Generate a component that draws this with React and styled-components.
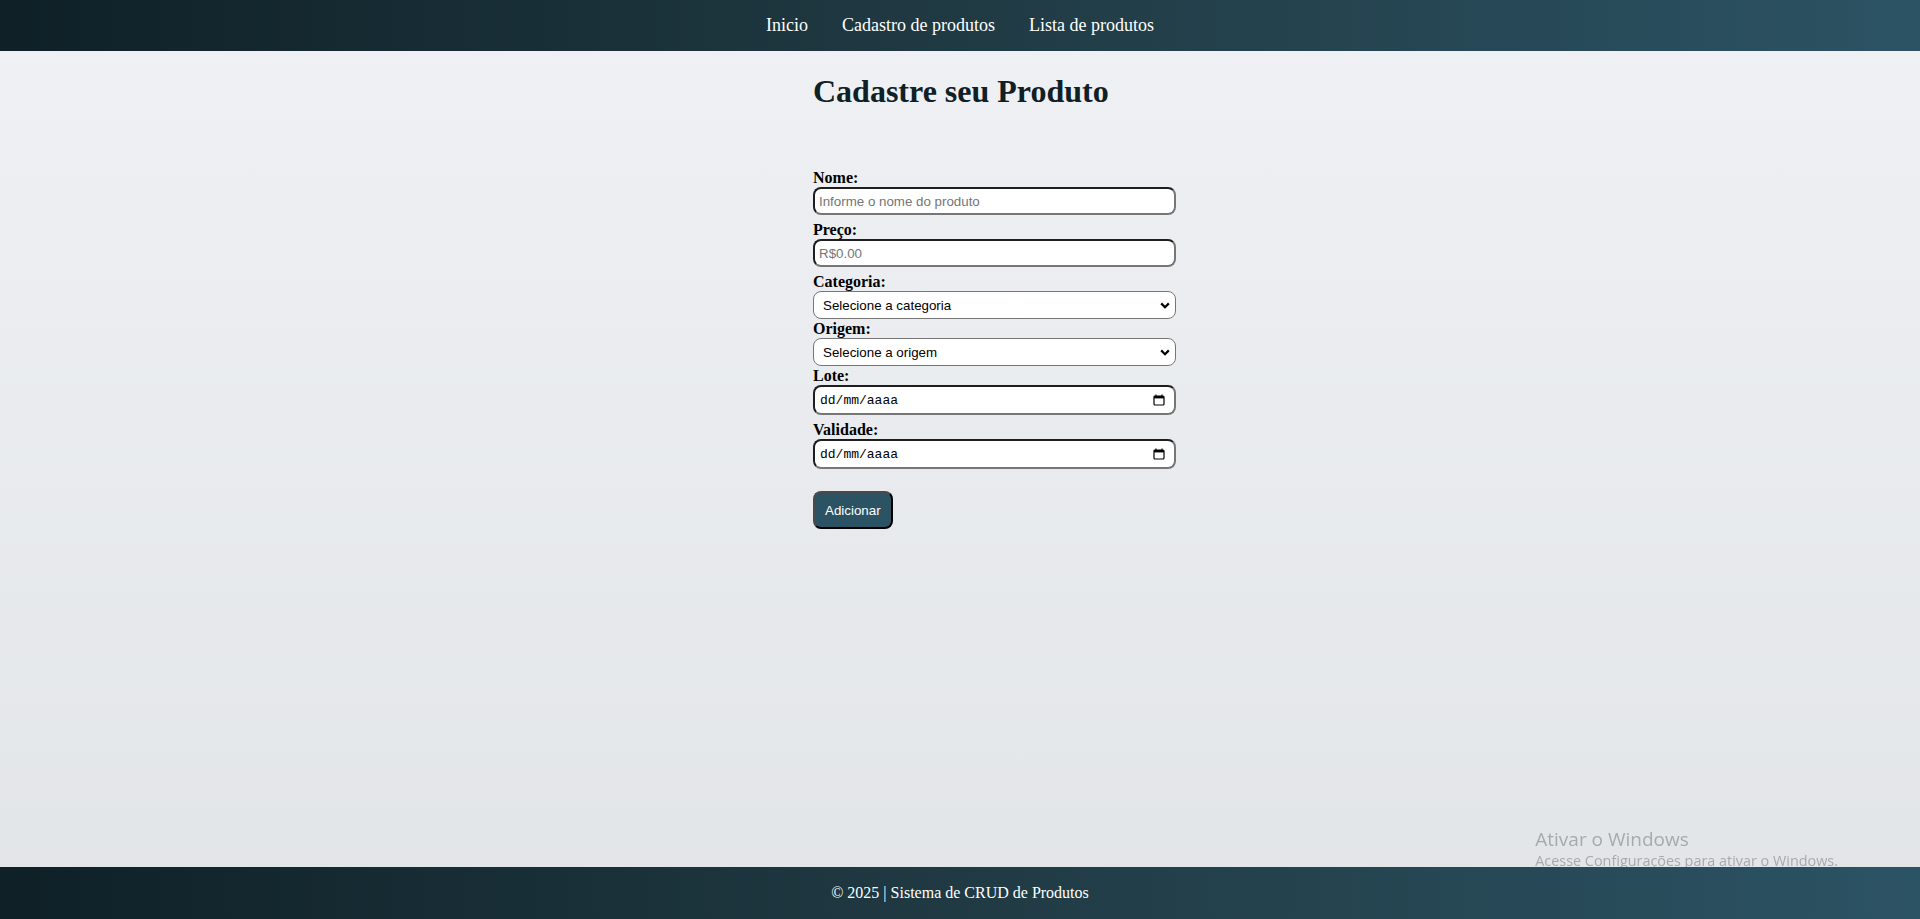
import React from "react"
import styled, { createGlobalStyle } from "styled-components"

const GlobalStyle = createGlobalStyle`
  * {
    box-sizing: border-box;
  }
  body {
    margin: 0;
    font-family: "Liberation Serif", "Times New Roman", serif;
  }
`

const Page = styled.div`
  min-height: 100vh;
  display: flex;
  flex-direction: column;
  background: linear-gradient(to bottom, #eff1f4, #e2e5e8);
`

const Bar = styled.div`
  position: relative;
  z-index: 1;
  display: flex;
  align-items: center;
  justify-content: center;
  height: ${(props) => props.h}px;
  background: linear-gradient(to right, #0f2027, #203a43, #2c5364);
  color: #ffffff;
`

const Nav = styled.nav`
  display: flex;
  gap: 34px;
`

const NavLink = styled.a`
  font-size: 18px;
  color: #ffffff;
  text-decoration: none;
  cursor: pointer;
`

const Main = styled.main`
  flex: 1;
  padding-left: calc(50% - 147px);
`

const Title = styled.h1`
  margin: 22px 0 0;
  font-size: 32px;
  line-height: 36px;
  color: #0f2027;
`

const Form = styled.form`
  width: 363px;
  margin-top: 60px;
  display: flex;
  flex-direction: column;
  align-items: flex-start;
`

const Label = styled.label`
  display: block;
  font-size: 16px;
  line-height: 18px;
  font-weight: bold;
  color: #000000;
`

const TextInput = styled.input`
  width: 100%;
  height: 28px;
  margin: 0 0 6px;
  padding: 4px;
  border: 2px solid;
  border-color: #1e1e1e #767676 #767676 #1e1e1e;
  border-radius: 8px;
  background: #ffffff;
  font-family: "Liberation Sans", Arial, sans-serif;
  font-size: 13.333px;
  color: #000000;
  outline: none;

  &::placeholder {
    color: #757575;
  }
`

const SelectWrap = styled.div`
  position: relative;
  width: 100%;
  margin-bottom: 1px;
`

const Select = styled.select`
  appearance: none;
  display: block;
  width: 100%;
  height: 28px;
  padding: 0 24px 0 9px;
  border: 1px solid #767676;
  border-radius: 8px;
  background: #ffffff;
  font-family: "Liberation Sans", Arial, sans-serif;
  font-size: 13.333px;
  color: #000000;
  outline: none;
`

const Chevron = styled.svg`
  position: absolute;
  right: 6px;
  top: 11px;
  pointer-events: none;
`

const DateBox = styled.div`
  width: 100%;
  height: 30px;
  margin-bottom: 6px;
  display: flex;
  align-items: center;
  justify-content: space-between;
  padding: 0 9px 0 5px;
  border: 2px solid;
  border-color: #1e1e1e #767676 #767676 #1e1e1e;
  border-radius: 8px;
  background: #ffffff;
  font-family: "Liberation Mono", "DejaVu Sans Mono", monospace;
  font-size: 13px;
  color: #000000;
`

const Button = styled.button`
  margin-top: 16px;
  height: 38px;
  padding: 0 10px;
  border: 2px solid;
  border-color: #4a4a4a #000000 #000000 #4a4a4a;
  border-radius: 8px;
  background: #2c5364;
  color: #ffffff;
  font-family: "Liberation Sans", Arial, sans-serif;
  font-size: 13.333px;
  cursor: pointer;
`

const FooterText = styled.p`
  margin: 0;
  font-size: 16px;
`

const Watermark = styled.div`
  position: fixed;
  right: 82px;
  bottom: 49px;
  font-family: "Open Sans", "Noto Sans", sans-serif;
  color: #a6aaae;
  pointer-events: none;
`

const WatermarkTitle = styled.div`
  font-size: 19px;
  line-height: 24px;
`

const WatermarkText = styled.div`
  font-size: 14.4px;
  line-height: 19px;
`

const CalendarIcon = () => (
  <svg width="12" height="12" viewBox="0 0 12 12" fill="none">
    <path d="M3 0.5V2.5M9 0.5V2.5" stroke="#000" strokeWidth="1.2" />
    <rect x="1" y="2" width="10" height="9" rx="1" stroke="#000" strokeWidth="1.2" />
    <rect x="1" y="2" width="10" height="2.4" fill="#000" />
  </svg>
)

const DateField = ({ id }) => (
  <DateBox id={id}>
    <span>dd/mm/aaaa</span>
    <CalendarIcon />
  </DateBox>
)

const SelectField = ({ id, placeholder }) => (
  <SelectWrap>
    <Select id={id} defaultValue="">
      <option value="" disabled>
        {placeholder}
      </option>
    </Select>
    <Chevron width="10" height="7" viewBox="0 0 10 7">
      <path d="M1.2 1.4L5 5.2L8.8 1.4" stroke="#000" strokeWidth="2.2" fill="none" />
    </Chevron>
  </SelectWrap>
)

const App = () => {
  return (
    <Page>
      <GlobalStyle />
      <Bar h={51}>
        <Nav>
          <NavLink>Inicio</NavLink>
          <NavLink>Cadastro de produtos</NavLink>
          <NavLink>Lista de produtos</NavLink>
        </Nav>
      </Bar>
      <Main>
        <Title>Cadastre seu Produto</Title>
        <Form onSubmit={(e) => e.preventDefault()}>
          <Label htmlFor="nome">Nome:</Label>
          <TextInput id="nome" placeholder="Informe o nome do produto" />
          <Label htmlFor="preco">Preço:</Label>
          <TextInput id="preco" placeholder="R$0.00" />
          <Label htmlFor="categoria">Categoria:</Label>
          <SelectField id="categoria" placeholder="Selecione a categoria" />
          <Label htmlFor="origem">Origem:</Label>
          <SelectField id="origem" placeholder="Selecione a origem" />
          <Label htmlFor="lote">Lote:</Label>
          <DateField id="lote" />
          <Label htmlFor="validade">Validade:</Label>
          <DateField id="validade" />
          <Button type="submit">Adicionar</Button>
        </Form>
      </Main>
      <Watermark>
        <WatermarkTitle>Ativar o Windows</WatermarkTitle>
        <WatermarkText>Acesse Configurações para ativar o Windows.</WatermarkText>
      </Watermark>
      <Bar h={52}>
        <FooterText>© 2025 | Sistema de CRUD de Produtos</FooterText>
      </Bar>
    </Page>
  )
}

export default App
